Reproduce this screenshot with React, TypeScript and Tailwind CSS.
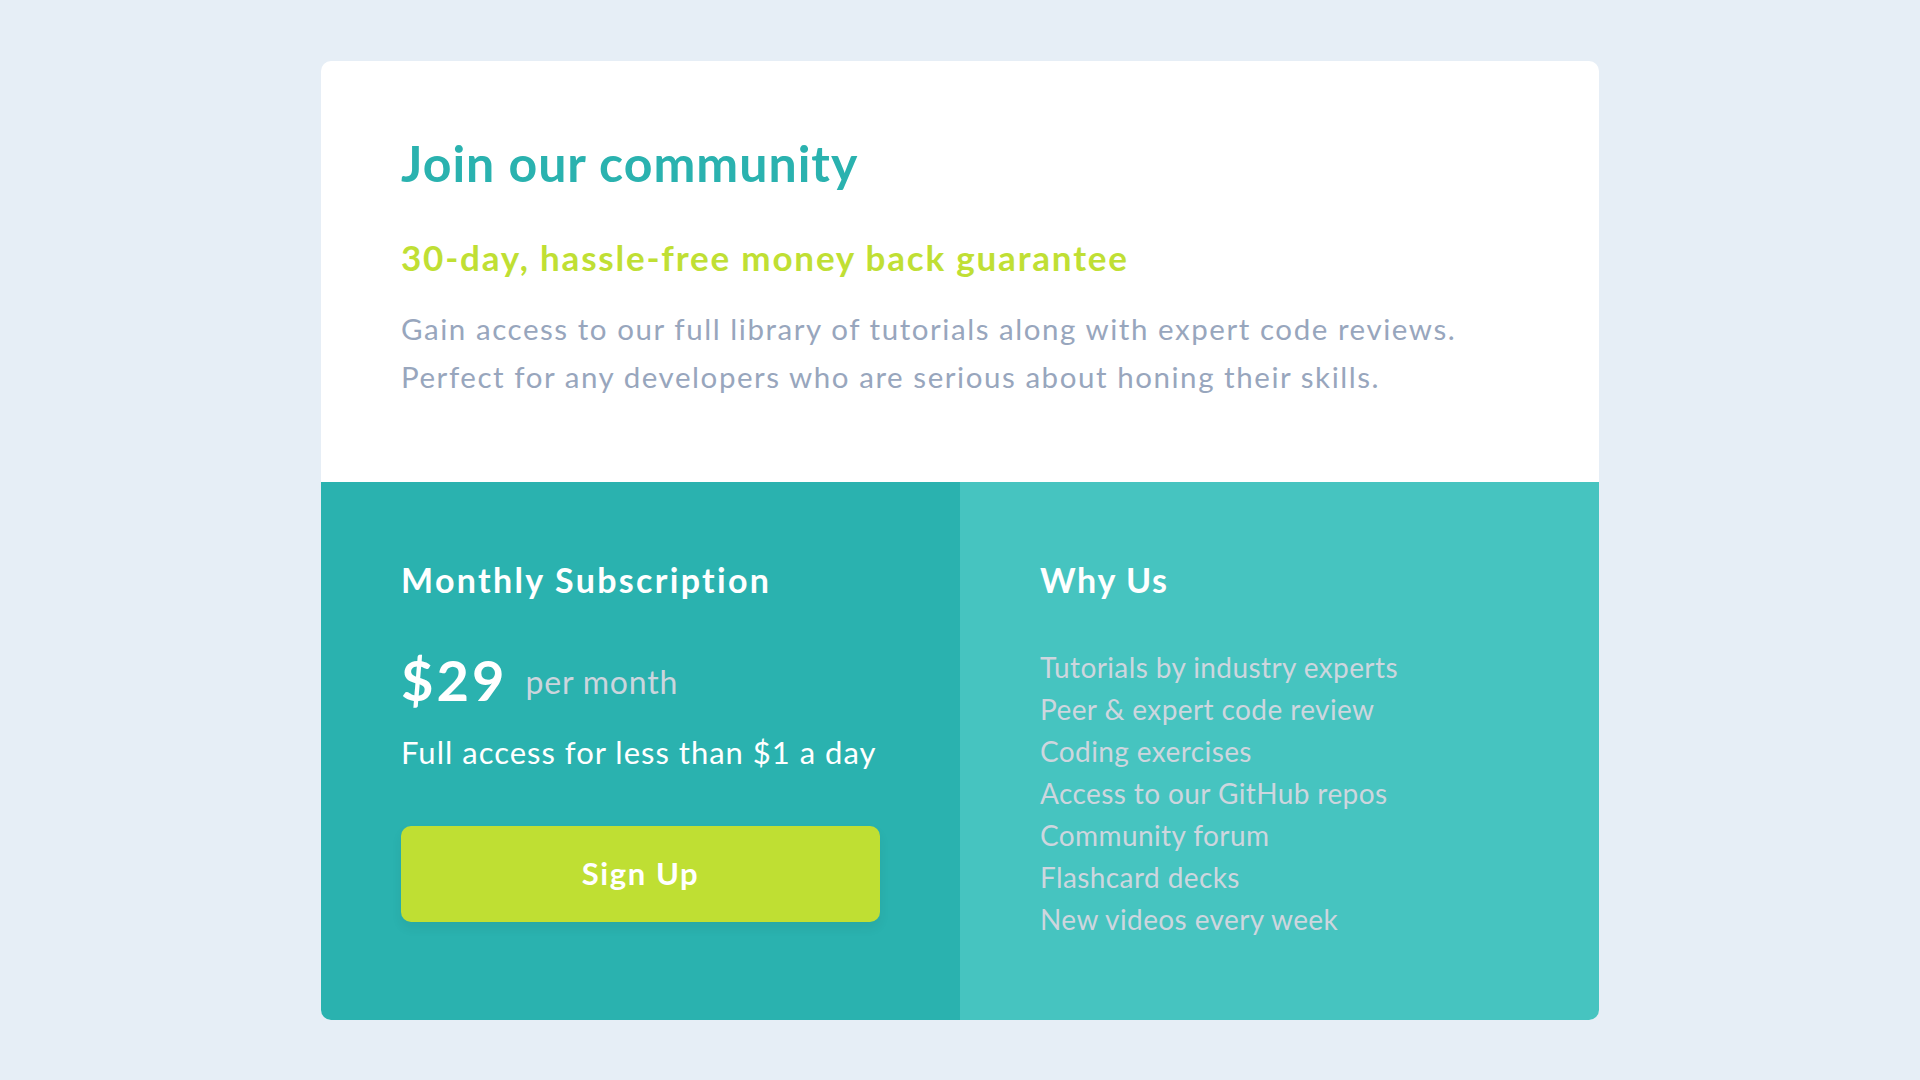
const features = [
  'Tutorials by industry experts',
  'Peer & expert code review',
  'Coding exercises',
  'Access to our GitHub repos',
  'Community forum',
  'Flashcard decks',
  'New videos every week',
];

const App = () => {
  return (
    <div className="min-h-screen w-full bg-[#e6eef6] flex items-center justify-center font-['Lato','Noto_Sans',sans-serif]">
      <div className="w-[1278px] rounded-[10px] overflow-hidden bg-white">
        {/* Intro */}
        <div className="px-20 pt-[72px] pb-[81px]">
          <h1 className="text-[50px] leading-[60px] font-bold tracking-[1px] text-[#2ab2af]">Join our community</h1>
          <h2 className="mt-[42px] text-[35px] leading-[44px] font-bold tracking-[1.8px] text-[#c0df34]">
            30-day, hassle-free money back guarantee
          </h2>
          <p className="mt-[26px] text-[29.5px] leading-[48px] tracking-[1.55px] text-[#98a6bd]">
            Gain access to our full library of tutorials along with expert code reviews.
            <br />
            Perfect for any developers who are serious about honing their skills.
          </p>
        </div>

        <div className="grid grid-cols-2">
          {/* Subscription */}
          <div className="bg-[#2ab2af] px-20 pt-[78px] pb-[98px]">
            <h3 className="text-[34px] leading-[40px] font-bold tracking-[2.3px] text-white">Monthly Subscription</h3>
            <div className="mt-[48px] flex items-center gap-[18px]">
              <span className="text-[56px] leading-[64px] font-bold tracking-[3px] text-white">$29</span>
              <span className="mt-[4px] text-[32px] leading-[40px] tracking-[0.8px] text-[#cbd5dd]">per month</span>
            </div>
            <p className="mt-[20px] text-[31px] leading-[40px] tracking-[1px] text-white">Full access for less than $1 a day</p>
            <button className="mt-[54px] w-full h-[96px] rounded-[10px] bg-[#bfdf33] text-white text-[31px] font-bold tracking-[1.6px] shadow-[0_6px_12px_rgba(0,0,0,0.06)]">
              Sign Up
            </button>
          </div>

          {/* Why us */}
          <div className="bg-[#46c4c0] px-20 pt-[78px] pb-[80px]">
            <h3 className="text-[34px] leading-[40px] font-bold tracking-[1.6px] text-white">Why Us</h3>
            <ul className="mt-[46px]">
              {features.map((f) => (
                <li key={f} className="text-[28px] leading-[42px] tracking-[0.4px] text-[#cdd6de]">
                  {f}
                </li>
              ))}
            </ul>
          </div>
        </div>
      </div>
    </div>
  );
};

export default App;
